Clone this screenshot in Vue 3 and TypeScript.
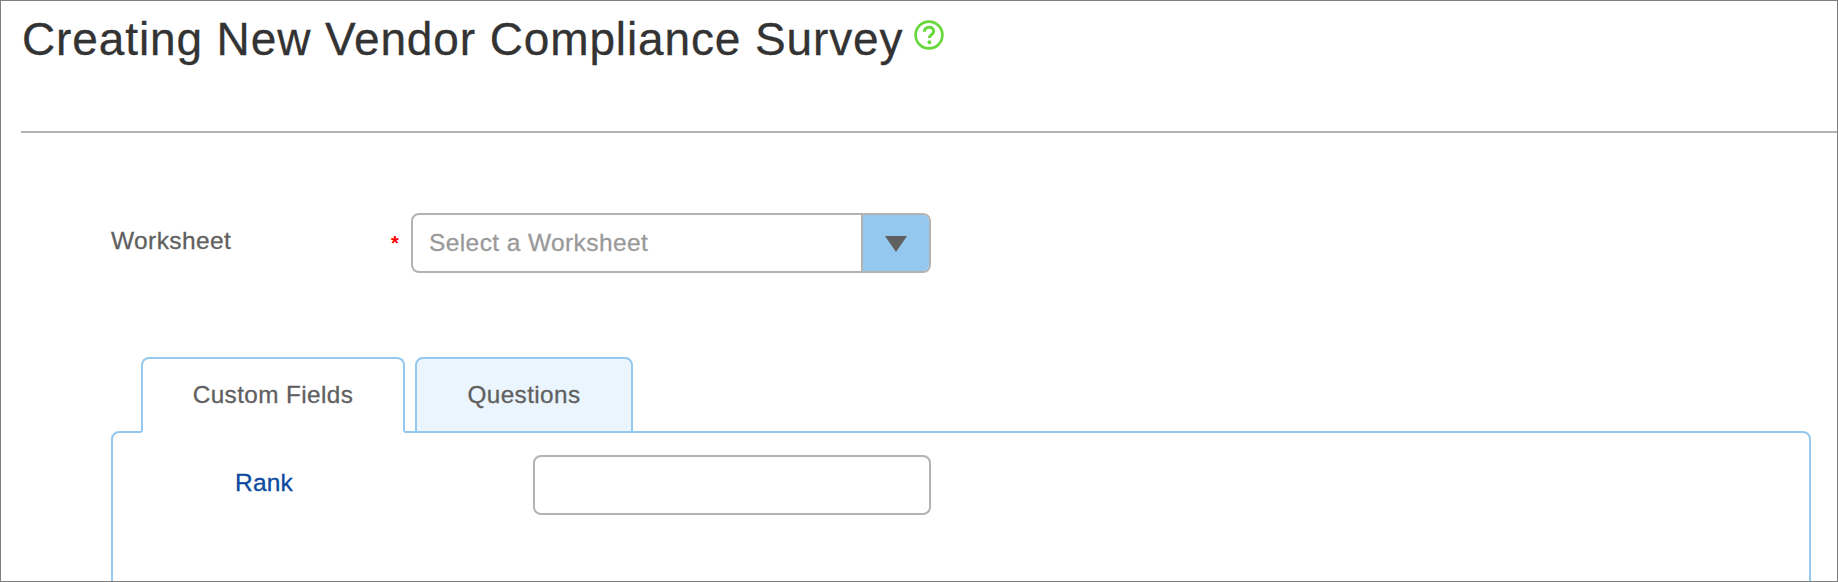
<script setup lang="ts">
import { ref } from 'vue';

const tabs = ['Custom Fields', 'Questions'];
const activeTab = ref('Custom Fields');
const rank = ref('');
</script>

<template>
  <div class="frame">
    <header class="page-head">
      <h1 class="page-title">Creating New Vendor Compliance Survey</h1>
      <svg class="help-icon" width="30" height="30" viewBox="0 0 30 30" fill="none">
        <circle cx="15" cy="15" r="13.4" stroke="#66d83c" stroke-width="2.6" />
        <path d="M10.4 11.8c0-2.8 2.1-4.6 4.7-4.6s4.6 1.6 4.6 4c0 3.4-4.3 3.5-4.3 6.8" stroke="#66d83c" stroke-width="3" />
        <circle cx="15.4" cy="22.2" r="1.9" fill="#66d83c" />
      </svg>
    </header>

    <div class="field-row">
      <label class="field-label">Worksheet</label>
      <span class="required">*</span>
      <div class="select-box">
        <span class="select-text">Select a Worksheet</span>
        <span class="select-btn"><i class="arrow"></i></span>
      </div>
    </div>

    <div class="tabs">
      <button
        v-for="tab in tabs"
        :key="tab"
        class="tab"
        :class="{ active: tab === activeTab }"
        @click="activeTab = tab"
      >
        {{ tab }}
      </button>
    </div>

    <section class="panel">
      <label class="rank-label" for="rank">Rank</label>
      <input id="rank" v-model="rank" class="rank-input" type="text" />
    </section>
  </div>
</template>

<style>
html,
body {
  margin: 0;
  background: #fff;
}
</style>

<style scoped>
.frame {
  box-sizing: border-box;
  width: 1838px;
  height: 582px;
  border: 1px solid #7f7f7f;
  overflow: hidden;
  font-family: 'Liberation Sans', Arial, sans-serif;
  background: #fff;
}

.page-head {
  display: flex;
  align-items: flex-start;
  height: 130px;
  margin-left: 20px;
  border-bottom: 2px solid #b3b3b3;
}

.page-title {
  margin: 13px 0 0 1px;
  font-size: 46px;
  line-height: 50px;
  font-weight: 400;
  letter-spacing: 0.88px;
  color: #333;
  -webkit-text-stroke: 0.3px #333;
}

.help-icon {
  margin: 19px 0 0 11px;
}

.field-row {
  display: flex;
  align-items: center;
  height: 60px;
  margin: 80px 0 0 110px;
}

.field-label {
  width: 280px;
  font-size: 24.5px;
  letter-spacing: 0.4px;
  color: #606060;
  margin-bottom: 4px;
  -webkit-text-stroke: 0.3px #606060;
}

.required {
  width: 20px;
  font-size: 20px;
  font-weight: 700;
  color: #f00;
}

.select-box {
  box-sizing: border-box;
  display: flex;
  width: 520px;
  height: 60px;
  border: 2px solid #b3b3b3;
  border-radius: 8px;
  overflow: hidden;
}

.select-text {
  flex: 1;
  padding-left: 16px;
  font-size: 24.5px;
  line-height: 56px;
  letter-spacing: 0.4px;
  color: #999;
  -webkit-text-stroke: 0.3px #999;
}

.select-btn {
  display: flex;
  align-items: center;
  justify-content: center;
  width: 66px;
  background: #94c8ee;
  border-left: 2px solid #b3b3b3;
}

.arrow {
  width: 0;
  height: 0;
  margin-top: 2px;
  border-left: 11px solid transparent;
  border-right: 11px solid transparent;
  border-top: 16px solid #5f5f5f;
}

.tabs {
  display: flex;
  gap: 10px;
  margin: 84px 0 0 140px;
  position: relative;
  z-index: 1;
}

.tab {
  box-sizing: border-box;
  height: 76px;
  margin-bottom: -2px;
  padding: 0;
  border: 2px solid #94c8ee;
  border-radius: 8px 8px 0 0;
  background: #eaf5fd;
  font-family: inherit;
  font-size: 24.3px;
  letter-spacing: 0.4px;
  color: #606060;
  -webkit-text-stroke: 0.3px #606060;
}

.tab:first-child {
  width: 264px;
}

.tab:last-child {
  width: 218px;
}

.tab.active {
  background: #fff;
  border-bottom-color: #fff;
}

.panel {
  box-sizing: border-box;
  display: flex;
  align-items: flex-start;
  height: 300px;
  margin: 0 26px 0 110px;
  padding-top: 22px;
  border: 2px solid #94c8ee;
  border-radius: 8px;
}

.rank-label {
  width: 420px;
  padding: 14px 0 0 122px;
  box-sizing: border-box;
  font-size: 24.5px;
  letter-spacing: 0.2px;
  color: #0b4a9e;
  -webkit-text-stroke: 0.3px #0b4a9e;
}

.rank-input {
  box-sizing: border-box;
  width: 398px;
  height: 60px;
  padding: 0 16px;
  border: 2px solid #b3b3b3;
  border-radius: 8px;
  outline: none;
}
</style>
